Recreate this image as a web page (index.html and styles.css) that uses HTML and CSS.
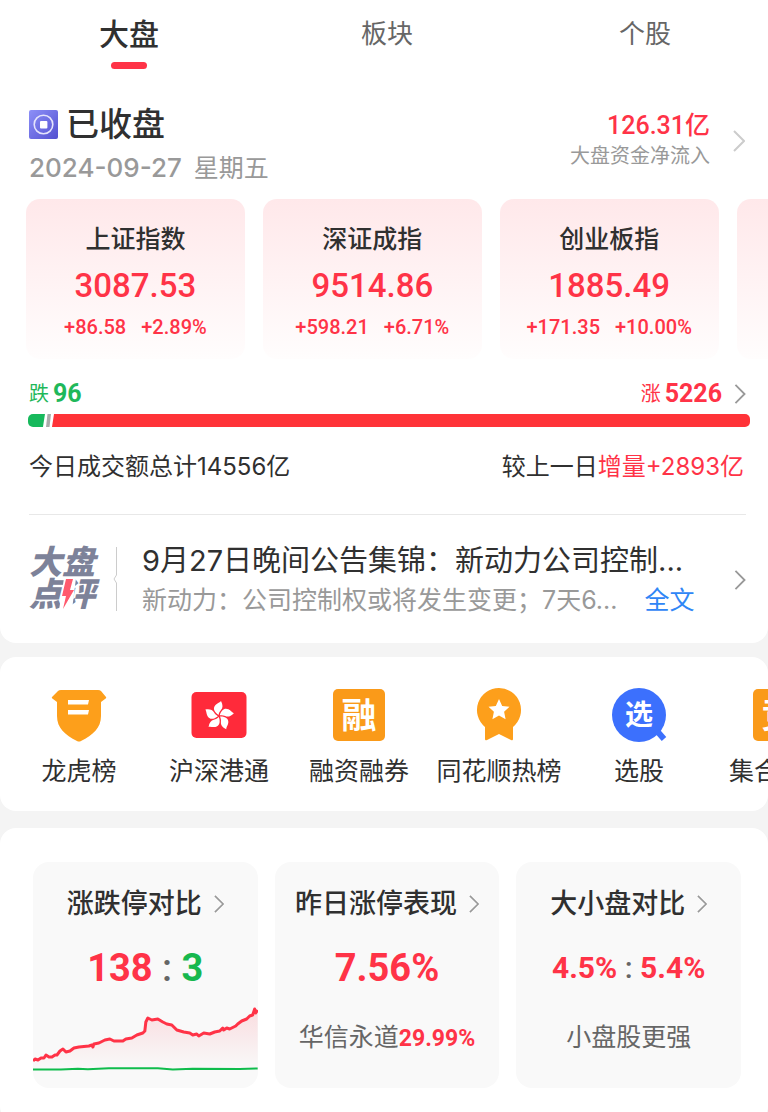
FILE: index.html
```html
<!DOCTYPE html>
<html lang="zh-CN">
<head>
    <meta charset="UTF-8">
    <meta name="viewport" content="width=device-width, initial-scale=1.0">
    <title>大盘</title>
    <link rel="stylesheet" href="styles.css">
</head>
<body>
    <section class="panel market">
        <nav class="tabs">
            <button class="tab active" type="button">大盘</button>
            <button class="tab" type="button">板块</button>
            <button class="tab" type="button">个股</button>
        </nav>

        <header class="status">
            <div class="status-left">
                <h1>
                    <svg class="status-icon" viewBox="0 0 29 29" aria-hidden="true">
                        <defs>
                            <linearGradient id="coin" x1="0" y1="0" x2="1" y2="1">
                                <stop offset="0" stop-color="#8d90f8"/>
                                <stop offset="1" stop-color="#5350d0"/>
                            </linearGradient>
                        </defs>
                        <rect width="29" height="29" rx="2" fill="url(#coin)"/>
                        <circle cx="14.5" cy="14.5" r="9.3" fill="none" stroke="#e4e3fc" stroke-width="1.6"/>
                        <rect x="11" y="11" width="7.4" height="7.4" rx="1" fill="#fff"/>
                    </svg>
                    已收盘
                </h1>
                <p class="date"><span class="num">2024-09-27</span><span>星期五</span></p>
            </div>
            <a class="flow" href="#">
                <span class="flow-text">
                    <strong>126.31亿</strong>
                    <span>大盘资金净流入</span>
                </span>
                <svg class="arrow light" viewBox="0 0 12 22" aria-hidden="true"><path d="M1 1l10 10L1 21"/></svg>
            </a>
        </header>

        <div class="indexes">
            <a class="index" href="#">
                <h2>上证指数</h2>
                <strong>3087.53</strong>
                <p><span>+86.58</span><span>+2.89%</span></p>
            </a>
            <a class="index" href="#">
                <h2>深证成指</h2>
                <strong>9514.86</strong>
                <p><span>+598.21</span><span>+6.71%</span></p>
            </a>
            <a class="index" href="#">
                <h2>创业板指</h2>
                <strong>1885.49</strong>
                <p><span>+171.35</span><span>+10.00%</span></p>
            </a>
            <a class="index" href="#" aria-label="更多"></a>
        </div>

        <div class="breadth">
            <span class="down">跌 <b>96</b></span>
            <a class="up" href="#">涨 <b>5226</b>
                <svg class="arrow" viewBox="0 0 12 22" aria-hidden="true"><path d="M1 1l10 10L1 21"/></svg>
            </a>
        </div>
        <div class="bar">
            <span class="bar-down"></span>
            <span class="bar-flat"></span>
            <span class="bar-up"></span>
        </div>

        <div class="turnover">
            <span>今日成交额总计14556亿</span>
            <span>较上一日<em>增量+2893亿</em></span>
        </div>

        <div class="news">
            <div class="news-logo">
                <span>大盘</span>
                <span>点评</span>
                <svg class="bolt" viewBox="0 0 18 32" aria-hidden="true">
                    <path class="bolt-back" d="M5 0h12l-4 32H0z"/>
                    <path d="M7 1h7l-3 11h4L4 31l3-13H3z"/>
                </svg>
            </div>
            <svg class="news-line" viewBox="0 0 4 64" aria-hidden="true"><path d="M3.500 0v28l-2.500 4 2.500 4v28"/></svg>
            <div class="news-text">
                <a class="news-title" href="#">9月27日晚间公告集锦：新动力公司控制...</a>
                <p><span>新动力：公司控制权或将发生变更；7天6...</span><a href="#">全文</a></p>
            </div>
            <a class="news-more" href="#" aria-label="更多">
                <svg class="arrow" viewBox="0 0 12 22" aria-hidden="true"><path d="M1 1l10 10L1 21"/></svg>
            </a>
        </div>
    </section>

    <nav class="panel tools">
        <a class="tool" href="#">
            <svg class="tool-icon" viewBox="0 0 56 56" aria-hidden="true">
                <path fill="#fd9f1b" d="M10 3h37q2 0 3 1l5 6q1 1-1 2l-4 3v14c0 12-8 19-20 25q-2 1-4 0C14 48 6 41 6 29V15l-4-3q-2-1-1-2l6-6q1-1 3-1z"/>
                <path fill="#fff" d="M17 13h21l-1 4.500H17zM17 23h21l-1 4.500H17z"/>
            </svg>
            龙虎榜
        </a>
        <a class="tool" href="#">
            <svg class="tool-icon" viewBox="0 0 56 56" aria-hidden="true">
                <defs>
                    <path id="petal" d="M-0.500-1C-5-4-6.500-8-3.500-11c2-2 4.500-2.500 5.500-4C4-11 4-8 2-6 .5-4.500 0-3-.5-1z"/>
                </defs>
                <rect x="0.500" y="5" width="55" height="46" rx="5" fill="#ff2a3a"/>
                <g fill="#fff" transform="translate(28 29)">
                    <use href="#petal"/>
                    <use href="#petal" transform="rotate(72)"/>
                    <use href="#petal" transform="rotate(144)"/>
                    <use href="#petal" transform="rotate(216)"/>
                    <use href="#petal" transform="rotate(288)"/>
                </g>
            </svg>
            沪深港通
        </a>
        <a class="tool" href="#">
            <span class="tool-icon"><b class="square">融</b></span>
            融资融券
        </a>
        <a class="tool" href="#">
            <svg class="tool-icon" viewBox="0 0 56 56" aria-hidden="true">
                <path fill="#fd9f1b" d="M28 1a22 22 0 0 1 14 39v12q0 2-2 1l-12-6-12 6q-2 1-2-1V40A22 22 0 0 1 28 1z"/>
                <path fill="#fff" d="M28 12l3.200 7 7.300.8-5.400 5 1.500 7.500L28 28.500l-6.600 3.800 1.500-7.500-5.400-5 7.300-.8z"/>
            </svg>
            同花顺热榜
        </a>
        <a class="tool" href="#">
            <span class="tool-icon">
                <svg class="lens" viewBox="0 0 56 56" aria-hidden="true">
                    <circle cx="28" cy="28" r="27" fill="#3c70fd"/>
                    <path d="M46 44l7 8" stroke="#3c70fd" stroke-width="6"/>
                </svg>
                <b class="lens-text">选</b>
            </span>
            选股
        </a>
        <a class="tool" href="#">
            <span class="tool-icon"><b class="square">竞</b></span>
            集合竞价
        </a>
    </nav>

    <section class="panel stats">
        <a class="stat" href="#">
            <h2>涨跌停对比<svg class="arrow" viewBox="0 0 12 22" aria-hidden="true"><path d="M1 1l10 10L1 21"/></svg></h2>
            <p class="stat-value">138 <i>:</i> <span class="green">3</span></p>
            <svg class="chart" viewBox="0 0 225 68" preserveAspectRatio="none" aria-hidden="true">
                <defs>
                    <linearGradient id="area" x1="0" y1="0" x2="0" y2="1">
                        <stop offset="0" stop-color="#ff3347" stop-opacity="0.140"/>
                        <stop offset="1" stop-color="#ff3347" stop-opacity="0"/>
                    </linearGradient>
                </defs>
                <path fill="url(#area)" d="M0 57L8 54 13 51 18 53 29 46 34 48 42 44 58 41 72 37 90 37 103 32 112 27 114 15 126 16 142 22 150 28 163 31 176 30 190 25 201 22 215 12 225 6V65H0z"/>
                <path class="line-up" d="M0 57L2 55 5 56 8 54 11 54 13 51 16 53 19 53 22 51 24 51 27 47 30 45 33 48 37 47 41 44 46 43 56 42 59 41 60 43 61 40 66 39 72 36 77 35 81 37 90 37 93 35 99 34 104 31 110 29 112 27 113 18 115 14 119 16 125 15 130 18 134 20 139 21 144 26 151 28 157 29 160 31 164 30 166 32 171 29 177 30 182 28 187 27 190 24 191 26 194 24 197 25 203 22 205 20 209 17 214 15 217 12 220 11 222 5 223 9 225 6"/>
                <path class="line-down" d="M0 65.500H28L45 64.800 55 65.200 76 64.300 125 64.300 140 65.500 160 64.800 207 64.900 225 64.500"/>
            </svg>
        </a>
        <a class="stat" href="#">
            <h2>昨日涨停表现<svg class="arrow" viewBox="0 0 12 22" aria-hidden="true"><path d="M1 1l10 10L1 21"/></svg></h2>
            <p class="stat-value">7.56%</p>
            <p class="stat-note">华信永道<b>29.99%</b></p>
        </a>
        <a class="stat" href="#">
            <h2>大小盘对比<svg class="arrow" viewBox="0 0 12 22" aria-hidden="true"><path d="M1 1l10 10L1 21"/></svg></h2>
            <p class="stat-value small">4.5% <i>:</i> 5.4%</p>
            <p class="stat-note">小盘股更强</p>
        </a>
    </section>
</body>
</html>
```

FILE: styles.css
```css
* {
    box-sizing: border-box;
}

body {
    margin: 0;
    background: #f4f4f4;
    color: #303030;
    font-family: Inter, "Noto Sans CJK SC", sans-serif;
    font-size: 25px;
    overflow-x: hidden;
}

h1, h2, p {
    margin: 0;
    font-weight: 500;
}

a {
    color: inherit;
    text-decoration: none;
}

em, i {
    font-style: normal;
}

.panel {
    background: #fff;
    border-radius: 16px;
    overflow: hidden;
}

.arrow {
    width: 12px;
    height: 20px;
    flex: none;
    fill: none;
    stroke: #999;
    stroke-width: 2;
}

.arrow.light {
    height: 22px;
    stroke: #ccc;
}

/* market */
.market {
    border-radius: 0 0 16px 16px;
}

.tabs {
    display: flex;
}

.tab {
    flex: 0 0 33.6%;
    display: flex;
    flex-direction: column;
    align-items: center;
    height: 69px;
    padding: 12px 0 0;
    border: none;
    background: none;
    color: #666;
    font-family: inherit;
    font-size: 26px;
    line-height: 44px;
}

.tab.active {
    color: #303030;
    font-size: 30px;
    font-weight: 500;
}

.tab.active::after {
    content: "";
    width: 36px;
    height: 7px;
    margin-top: 6px;
    border-radius: 4px;
    background: #ff3347;
}

.status {
    display: flex;
    justify-content: space-between;
    align-items: flex-start;
    padding: 34px 23px 10px 29px;
}

.status h1 {
    display: flex;
    align-items: center;
    gap: 8px;
    font-size: 33px;
    line-height: 42px;
}

.status-icon {
    width: 29px;
    height: 29px;
}

.date {
    display: flex;
    align-items: center;
    gap: 12px;
    margin-top: 2px;
    color: #999;
    font-weight: 400;
    line-height: 42px;
}

.date .num {
    font-size: 26px;
    font-weight: 500;
}

.flow {
    display: flex;
    align-items: center;
    gap: 23px;
    padding-top: 8px;
}

.flow-text {
    display: flex;
    flex-direction: column;
    text-align: right;
    font-size: 20px;
    line-height: 30px;
    color: #999;
}

.flow-text strong {
    color: #ff3347;
    font-family: Roboto, "Noto Sans CJK SC", sans-serif;
    font-size: 25px;
    font-weight: 500;
}

.indexes {
    display: flex;
    gap: 18px;
    padding-left: 26px;
}

.index {
    flex: 0 0 29.500%;
    height: 160px;
    padding-top: 21px;
    border-radius: 14px;
    background: linear-gradient(#ffe8ea, #fffdfd);
    color: #ff3347;
    font-family: Roboto, "Noto Sans CJK SC", sans-serif;
    text-align: center;
}

.index h2 {
    color: #303030;
    font-size: 25px;
    line-height: 40px;
}

.index strong {
    display: block;
    font-size: 33px;
    font-weight: 500;
    line-height: 52px;
}

.index p {
    display: flex;
    justify-content: center;
    gap: 15px;
    font-size: 20px;
    line-height: 30px;
}

.breadth {
    display: flex;
    justify-content: space-between;
    padding: 20px 22px 5px 29px;
    font-size: 20px;
    line-height: 30px;
}

.breadth b {
    font-family: Roboto, sans-serif;
    font-size: 25px;
    font-weight: 700;
}

.down, .up {
    display: flex;
    align-items: center;
    gap: 4px;
}

.down {
    color: #1fb85a;
}

.up {
    color: #ff3347;
}

.up .arrow {
    margin-left: 8px;
}

.bar {
    display: flex;
    gap: 1px;
    height: 13px;
    margin: 0 18px 0 28px;
}

.bar-down {
    width: 17px;
    border-radius: 5px 0 0 5px;
    background: #17b95c;
    clip-path: polygon(0 0, 100% 0, 88% 100%, 0 100%);
}

.bar-flat {
    width: 5px;
    background: #aaa;
    clip-path: polygon(30% 0, 100% 0, 70% 100%, 0 100%);
}

.bar-up {
    flex: 1;
    border-radius: 0 5px 5px 0;
    background: #ff3338;
    clip-path: polygon(2px 0, 100% 0, 100% 100%, 0 100%);
}

.turnover {
    display: flex;
    justify-content: space-between;
    padding: 20px 24px 27px 29px;
    font-size: 24px;
    line-height: 40px;
}

.turnover em {
    color: #ff3347;
}

.news {
    display: flex;
    align-items: flex-start;
    margin: 0 22px 0 29px;
    padding: 26px 0 24px;
    border-top: 1px solid #e8e8e8;
}

.news-logo {
    position: relative;
    width: 68px;
    margin-top: 5px;
    color: #7d8299;
    font-size: 33px;
    font-style: italic;
    font-weight: 900;
    line-height: 32px;
}

.news-logo span {
    display: block;
}

.bolt {
    position: absolute;
    left: 30px;
    top: 32px;
    width: 18px;
    height: 32px;
    fill: #ff5a6e;
}

.bolt-back {
    fill: #fff;
}

.news-line {
    width: 4px;
    height: 64px;
    margin: 6px 25px 0 16px;
    fill: none;
    stroke: #ccc;
}

.news-text {
    flex: 1;
    min-width: 0;
    white-space: nowrap;
}

.news-title {
    display: block;
    font-size: 29px;
    line-height: 40px;
}

.news-text p {
    display: flex;
    gap: 27px;
    color: #999;
    font-weight: 400;
    line-height: 38px;
}

.news-text p a {
    color: #2f86f6;
}

.news-more {
    display: flex;
    align-self: center;
}

/* tools */
.tools {
    display: flex;
    margin-top: 14px;
    padding: 30px 0 22px 9px;
}

.tool {
    flex: 0 0 140px;
    display: flex;
    flex-direction: column;
    align-items: center;
    gap: 10px;
    line-height: 36px;
    white-space: nowrap;
}

.tool-icon {
    position: relative;
    display: flex;
    align-items: center;
    justify-content: center;
    width: 56px;
    height: 56px;
}

.square {
    width: 52px;
    height: 52px;
    border-radius: 5px;
    background: #fa9a19;
    color: #fff;
    font-size: 35px;
    line-height: 52px;
    text-align: center;
}

.lens {
    width: 56px;
    height: 56px;
}

.lens-text {
    position: absolute;
    left: 0;
    right: 0;
    color: #fff;
    font-size: 28px;
    line-height: 56px;
    text-align: center;
}

/* stats */
.stats {
    display: flex;
    gap: 17px;
    margin-top: 17px;
    padding: 34px 27px 34px 33px;
}

.stat {
    flex: 1;
    height: 226px;
    padding-top: 22px;
    border-radius: 16px;
    background: #f9f9f9;
    text-align: center;
}

.stat h2 {
    display: flex;
    align-items: center;
    justify-content: center;
    gap: 12px;
    font-size: 27px;
    line-height: 40px;
}

.stat h2 .arrow {
    width: 10px;
    height: 18px;
}

.stat-value {
    margin-top: 20px;
    color: #ff3347;
    font-family: Roboto, sans-serif;
    font-size: 38px;
    font-weight: 700;
    line-height: 48px;
}

.stat-value.small {
    font-size: 30px;
}

.stat-value i {
    color: #666;
    font-weight: 500;
}

.green {
    color: #17b84e;
}

.stat-note {
    margin-top: 25px;
    color: #666;
    font-weight: 400;
    line-height: 40px;
}

.stat-note b {
    color: #ff3347;
    font-family: Roboto, sans-serif;
    font-size: 23px;
}

.chart {
    display: block;
    width: 100%;
    height: 68px;
    margin-top: 12px;
    fill: none;
}

.line-up {
    stroke: #ff3347;
    stroke-width: 3;
    stroke-linejoin: round;
}

.line-down {
    stroke: #0fbc4c;
    stroke-width: 2;
}
```
